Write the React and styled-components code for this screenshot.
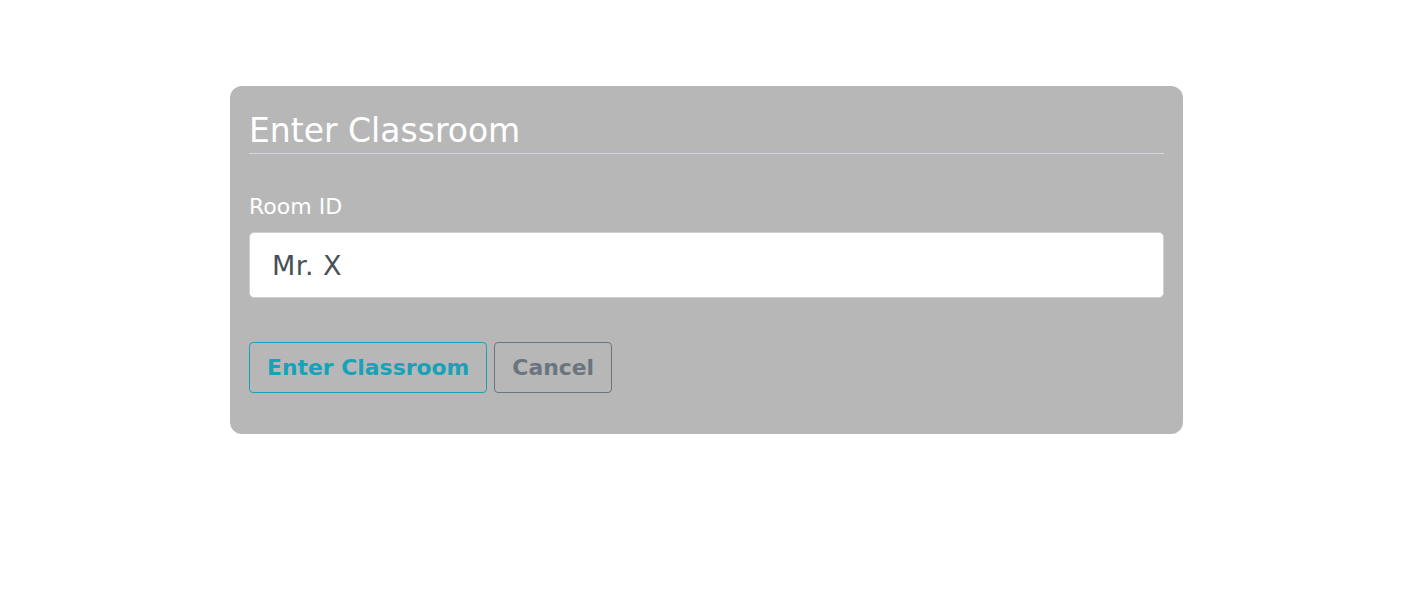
import React from 'react';
import styled, { createGlobalStyle } from 'styled-components';

const GlobalStyle = createGlobalStyle`
    body {
        margin: 0;
        background: #ffffff;
        font-family: "DejaVu Sans", Verdana, sans-serif;
    }
`;

// 페이지 전체 영역
const Page = styled.div`
    display: flex;
    justify-content: center;
    align-items: flex-start;
    padding: 86px 12px 0 0;
    height: 611px;
    box-sizing: border-box;
`;

// 회색 카드
const Card = styled.div`
    width: 953px;
    box-sizing: border-box;
    background: #b7b7b7;
    border-radius: 12px;
    padding: 23px 19px 41px;
`;

const Title = styled.h2`
    margin: 0;
    font-size: 33px;
    font-weight: normal;
    color: #ffffff;
    line-height: 44px;
    border-bottom: 1px solid #d3d7e0;
`;

const Label = styled.label`
    display: block;
    margin-top: 38px;
    font-size: 22px;
    color: #ffffff;
    line-height: 30px;
`;

const Input = styled.input`
    display: block;
    width: 100%;
    box-sizing: border-box;
    margin-top: 10px;
    height: 66px;
    padding: 0 22px;
    font-family: inherit;
    font-size: 27px;
    letter-spacing: 0.5px;
    color: #495057;
    background: #ffffff;
    border: 1px solid #d0d0d0;
    border-radius: 5px;
    outline: none;
`;

const ButtonRow = styled.div`
    display: flex;
    gap: 7px;
    margin-top: 44px;
`;

const OutlineButton = styled.button`
    height: 51px;
    padding: 0 17px;
    font-family: inherit;
    font-size: 21.9px;
    font-weight: bold;
    background: transparent;
    color: ${(p) => p.$color};
    border: 1px solid ${(p) => p.$color};
    border-radius: 4px;
    cursor: pointer;
`;

const App = () => {
    return (
        <>
            <GlobalStyle />
            <Page>
                <Card>
                    <Title>Enter Classroom</Title>
                    <Label htmlFor="room">Room ID</Label>
                    <Input id="room" defaultValue="Mr. X" />
                    <ButtonRow>
                        <OutlineButton $color="#17a2b8">Enter Classroom</OutlineButton>
                        <OutlineButton $color="#6c757d">Cancel</OutlineButton>
                    </ButtonRow>
                </Card>
            </Page>
        </>
    );
};

export default App;
